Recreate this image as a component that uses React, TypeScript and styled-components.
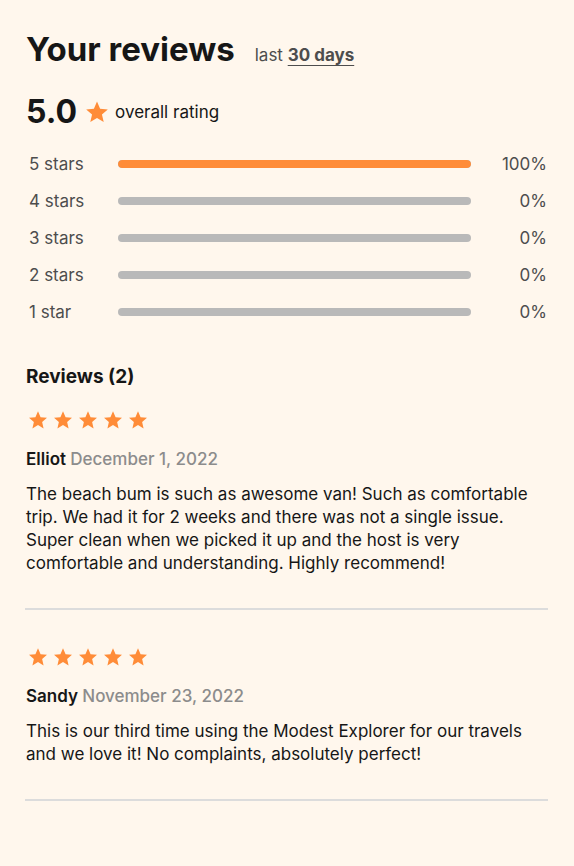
import React from "react";
import styled, { createGlobalStyle } from "styled-components";

const GlobalStyle = createGlobalStyle`
  html, body { margin: 0; padding: 0; background: #FFF7ED; }
  body { font-family: Inter, "Noto Sans", sans-serif; color: #161616; }
  * { box-sizing: border-box; }
`;

const Page = styled.main`
  width: 574px;
  min-height: 866px;
  padding: 27px 27px 40px 26px;
  background: #FFF7ED;
`;

const TitleRow = styled.div`
  display: flex;
  align-items: baseline;
  gap: 20px;
`;

const Title = styled.h1`
  margin: 0;
  font-size: 33px;
  font-weight: 700;
  line-height: 44px;
`;

const Period = styled.p`
  margin: 0;
  font-size: 17px;
  color: #4d4d4d;
  font-weight: 400;
`;

const Underlined = styled.span`
  font-weight: 700;
  text-decoration: underline;
  text-underline-offset: 4px;
`;

const OverallRow = styled.div`
  display: flex;
  align-items: center;
  gap: 8px;
  margin-top: 21px;
`;

const Score = styled.span`
  font-size: 32px;
  font-weight: 700;
  line-height: 40px;
`;

const OverallLabel = styled.span`
  font-size: 17px;
  font-weight: 400;
  margin-left: -2px;
`;

const Breakdown = styled.div`
  display: flex;
  flex-direction: column;
  gap: 16px;
  margin-top: 21px;
`;

const BarRow = styled.div`
  display: grid;
  grid-template-columns: 92px 1fr 76px;
  align-items: center;
  height: 21px;
`;

const BarLabel = styled.span`
  font-size: 17px;
  font-weight: 400;
  color: #4d4d4d;
  padding-left: 3px;
`;

const Track = styled.div`
  height: 8px;
  border-radius: 4px;
  background: #b9b9b9;
  overflow: hidden;
`;

const Fill = styled.div`
  height: 100%;
  background: #ff8c38;
  border-radius: 4px;
`;

const Percent = styled.span`
  font-size: 17px;
  font-weight: 400;
  color: #4d4d4d;
  text-align: right;
`;

const ReviewsHeading = styled.h3`
  margin: 43px 0 0;
  font-size: 19px;
  font-weight: 700;
  line-height: 24px;
`;

const Review = styled.article`
  display: flex;
  flex-direction: column;
  padding-top: 21px;
  & + & {
    padding-top: 37px;
  }
`;

const Stars = styled.div`
  display: flex;
  gap: 5px;
  padding-left: 2px;
  margin-bottom: 17px;
`;

const Meta = styled.p`
  margin: 0 0 12px;
  font-size: 17px;
  line-height: 24px;
  font-weight: 600;
`;

const DateText = styled.span`
  color: #8c8c8c;
  font-weight: 500;
`;

const Body = styled.p`
  margin: 0;
  font-size: 17px;
  line-height: 23px;
  font-weight: 400;
  color: #161616;
  max-width: 515px;
`;

const Divider = styled.hr`
  margin: 33px -1px 0 -1px;
  border: none;
  height: 2px;
  background: #dcdcdc;
`;

const Star = ({ size = 20 }: { size?: number }) => (
  <svg width={size} height={size} viewBox="0 0 24 24" aria-hidden>
    <path
      fill="#FF8C38"
      d="M12 1.6l3.1 7.1 7.7.7-5.85 5.1 1.75 7.6L12 18.1l-6.7 4 1.75-7.6L1.2 9.4l7.7-.7z"
    />
  </svg>
);

const bars = [
  { label: "5 stars", pct: 100 },
  { label: "4 stars", pct: 0 },
  { label: "3 stars", pct: 0 },
  { label: "2 stars", pct: 0 },
  { label: "1 star", pct: 0 },
];

const reviews = [
  {
    name: "Elliot",
    date: "December 1, 2022",
    text: "The beach bum is such as awesome van! Such as comfortable trip. We had it for 2 weeks and there was not a single issue. Super clean when we picked it up and the host is very comfortable and understanding. Highly recommend!",
  },
  {
    name: "Sandy",
    date: "November 23, 2022",
    text: "This is our third time using the Modest Explorer for our travels and we love it! No complaints, absolutely perfect!",
  },
];

export default function App() {
  return (
    <>
      <GlobalStyle />
      <Page>
        <TitleRow>
          <Title>Your reviews</Title>
          <Period>
            last <Underlined>30 days</Underlined>
          </Period>
        </TitleRow>
        <OverallRow>
          <Score>5.0</Score>
          <Star size={24} />
          <OverallLabel>overall rating</OverallLabel>
        </OverallRow>
        <Breakdown>
          {bars.map((b) => (
            <BarRow key={b.label}>
              <BarLabel>{b.label}</BarLabel>
              <Track>
                <Fill style={{ width: `${b.pct}%` }} />
              </Track>
              <Percent>{b.pct}%</Percent>
            </BarRow>
          ))}
        </Breakdown>
        <ReviewsHeading>Reviews (2)</ReviewsHeading>
        {reviews.map((r) => (
          <Review key={r.name}>
            <Stars>
              {[0, 1, 2, 3, 4].map((i) => (
                <Star key={i} />
              ))}
            </Stars>
            <Meta>
              {r.name} <DateText>{r.date}</DateText>
            </Meta>
            <Body>{r.text}</Body>
            <Divider />
          </Review>
        ))}
      </Page>
    </>
  );
}
